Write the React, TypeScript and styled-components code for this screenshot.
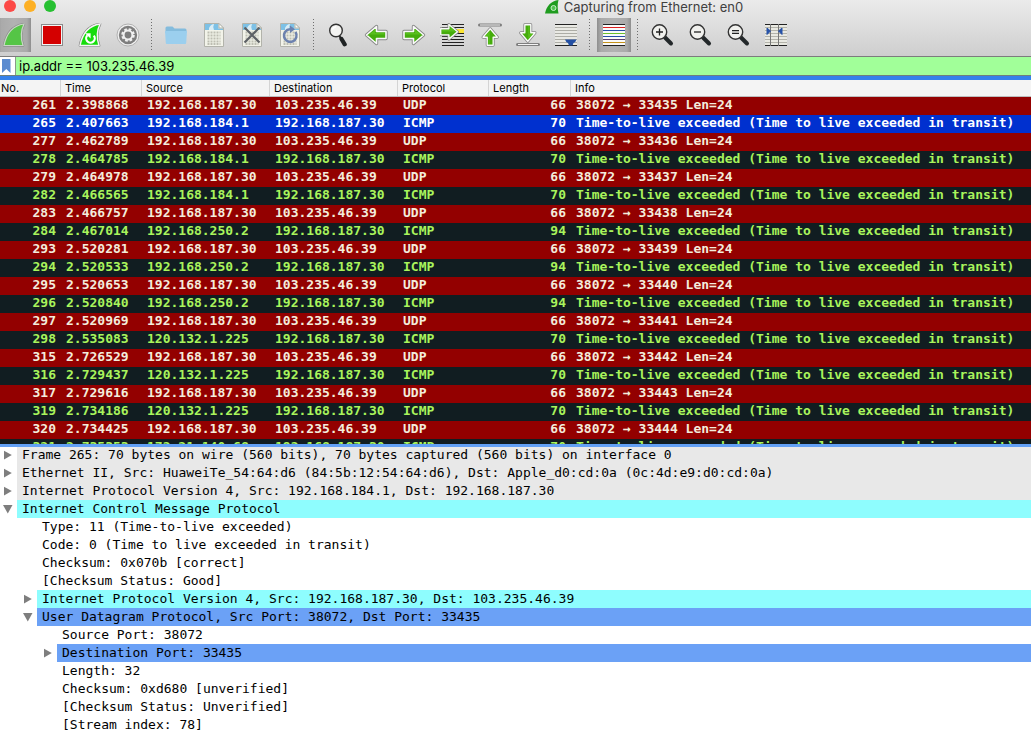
import React, { useState } from "react";
import type { ReactNode } from "react";
import styled, { createGlobalStyle, css } from "styled-components";

const UI = '"Inter", "Liberation Sans", sans-serif';
const MONO = '"DejaVu Sans Mono", "Liberation Mono", monospace';

const GlobalStyle = createGlobalStyle`
  * { box-sizing: border-box; }
  body { margin: 0; background: #fff; }
  button, input { font: inherit; color: inherit; margin: 0; padding: 0; border: 0; background: none; }
`;

/* ---------- window frame ---------- */

const Window = styled.div`
  height: 100vh;
  display: flex;
  flex-direction: column;
  overflow: hidden;
  background: #fff;
  color: #000;
  font-family: ${UI};
`;

const Chrome = styled.header`
  flex: none;
  overflow: hidden;
  background: linear-gradient(#ebebeb, #cecece);
`;

const TitleBar = styled.div`
  height: 14px;
  display: flex;
  align-items: flex-start;
`;

const Lights = styled.div`
  flex: none;
  width: 256px;
  display: flex;
  gap: 8px;
  padding-left: 4px;
`;

const Light = styled.button<{ $color: string }>`
  width: 12px;
  height: 12px;
  border-radius: 50%;
  background: ${(p) => p.$color};
`;

const Title = styled.h1`
  flex: 1;
  margin: 0;
  display: flex;
  justify-content: center;
  gap: 4px;
  white-space: nowrap;
  font-size: 13px;
  line-height: 14px;
  font-weight: 400;
  color: #404040;
`;

/* ---------- toolbar ---------- */

const ToolBar = styled.nav`
  height: 42px;
  display: flex;
  padding-top: 4px;
  margin-left: -5px;
`;

const Tool = styled.button<{ $pressed?: boolean }>`
  flex: none;
  width: 34px;
  height: 34px;
  margin: 0 2px;
  display: grid;
  place-items: center;
  ${(p) =>
    p.$pressed &&
    css`
      background: linear-gradient(90deg, #8e8e8e, #aaa 12%, #b2b2b2 50%, #aaa 88%, #8e8e8e);
    `}
`;

const Separator = styled.span`
  flex: none;
  width: 1px;
  height: 32px;
  margin: 1px 5px 0 4px;
  background: repeating-linear-gradient(#6e6e6e 0 1px, transparent 1px 3px);
`;

/* ---------- filter ---------- */

const FilterBar = styled.form`
  flex: none;
  height: 20px;
  display: flex;
  border-top: 1px solid #7c7c7c;
  border-bottom: 1px solid #6f7f7c;
  background: #a1ff99;
`;

const Bookmark = styled.button`
  width: 16px;
  display: grid;
  place-items: center start;
  padding-left: 2px;
  background: #fff;
  border-right: 1px solid #8a9a88;
`;

const FilterInput = styled.input`
  flex: 1;
  min-width: 0;
  padding-left: 3px;
  font-size: 13px;
  line-height: 18px;
  outline: 0;
`;

const FocusLine = styled.div`
  flex: none;
  height: 4px;
  background: #3581ea;
`;

/* ---------- packet list ---------- */

const PacketPane = styled.main`
  flex: 364 1 0;
  min-height: 0;
  overflow: hidden;
`;

const PacketTable = styled.table`
  width: 100%;
  table-layout: fixed;
  border-collapse: separate;
  border-spacing: 0;
`;

const Col = styled.col<{ $width?: number }>`
  width: ${(p) => (p.$width ? `${p.$width}px` : "auto")};
`;

const HeadCell = styled.th<{ $first?: boolean }>`
  height: 17px;
  padding: 0 0 0 ${(p) => (p.$first ? 1 : 4)}px;
  border-bottom: 1px solid #bdbdbd;
  background: #f4f4f4;
  box-shadow: inset -1px 0 #d4d4d4;
  text-align: left;
  font-size: 11px;
  line-height: 16px;
  font-weight: 400;
  &:last-child { box-shadow: none; }
`;

type Tone = "udp" | "icmp" | "selected";

const tones: Record<Tone, ReturnType<typeof css>> = {
  udp: css`background: #930000; color: #f3ecdc;`,
  icmp: css`background: #111d21; color: #a9f45c;`,
  selected: css`background: #0030cf; color: #fff;`,
};

const PacketRow = styled.tr<{ $tone: Tone }>`
  ${(p) => tones[p.$tone]}
`;

const Cell = styled.td<{ $right?: boolean }>`
  height: 18px;
  padding: 0 5px 2px;
  overflow: hidden;
  white-space: pre;
  text-align: ${(p) => (p.$right ? "right" : "left")};
  font-family: ${MONO};
  font-size: 13px;
  line-height: 16px;
  font-weight: 700;
`;

/* ---------- detail tree ---------- */

const Splitter = styled.div`
  flex: none;
  height: 3px;
  margin-bottom: -1px;
  z-index: 1;
  background: #62a0f5;
`;

const DetailPane = styled.section`
  flex: 298 1 0;
  min-height: 0;
  overflow: hidden;
  font-family: ${MONO};
  font-size: 13px;
  line-height: 18px;
`;

const DetailRow = styled.div<{ $level: number }>`
  height: 18px;
  display: flex;
  padding-left: ${(p) => p.$level * 20}px;
`;

const Toggle = styled.button`
  flex: none;
  width: 17px;
  display: grid;
  place-items: center start;
  padding-left: 3px;
`;

const Indent = styled.span`
  flex: none;
  width: 17px;
`;

const DetailText = styled.span<{ $fill?: string }>`
  flex: 1;
  padding-left: 5px;
  white-space: pre;
  background: ${(p) => p.$fill ?? "transparent"};
`;

/* ---------- icons ---------- */

const Icon = ({ children }: { children: ReactNode }) => (
  <svg width="24" height="24" viewBox="0 0 24 24" fill="none" aria-hidden="true">
    {children}
  </svg>
);

const FIN = "M2 22.5C4.500 10 11.500 2.500 22 1C18.500 8 18.500 15 21 22.500Z";

const Fin = () => (
  <Icon>
    <path d={FIN} fill="#55c546" stroke="#8d8d8d" strokeWidth="2.400" strokeLinejoin="round" />
    <path d={FIN} fill="#55c546" stroke="#c9d8c6" strokeWidth="1.200" />
  </Icon>
);

const StopIcon = () => (
  <Icon>
    <rect x="1.500" y="1.500" width="21" height="21" fill="#f4f4f4" stroke="#8b8b8b" />
    <rect x="3" y="3" width="18" height="18" fill="#d40000" />
  </Icon>
);

const RestartIcon = () => (
  <Icon>
    <path d={FIN} fill="#15dc0c" stroke="#7f7f7f" strokeWidth="2.600" strokeLinejoin="round" />
    <path d={FIN} fill="#15dc0c" stroke="#f5f5f5" strokeWidth="1.400" />
    <path d="M9.500 12.200A4.300 4.300 0 1 0 15.800 12.600" stroke="#fff" strokeWidth="2.200" />
    <path d="M7 10.200h5.600v5.400z" fill="#fff" />
  </Icon>
);

const OptionsIcon = () => (
  <Icon>
    <circle cx="12" cy="12" r="11" fill="#f1f1f1" stroke="#b0b0b0" />
    <circle cx="12" cy="12" r="9.200" fill="#7e7e7e" />
    <circle cx="12" cy="12" r="5.600" stroke="#f1f1f1" strokeWidth="2.400" strokeDasharray="2.600 1.800" />
    <circle cx="12" cy="12" r="4.400" fill="#7e7e7e" stroke="#f1f1f1" strokeWidth="2" />
  </Icon>
);

const FolderIcon = () => (
  <Icon>
    <path d="M1.500 5q0-1.500 1.500-1.500h5.500l2 2H21q1.500 0 1.500 1.500v3h-21z" fill="#84bcdd" />
    <path d="M1 8h22l-.8 12q0 1-1 1H2.800q-1 0-1-1z" fill="#9bcfee" />
  </Icon>
);

const Paper = ({ children }: { children?: ReactNode }) => (
  <Icon>
    <path d="M2.500.5h14.500l4.500 4.500v18.500h-19z" fill="#f2f3e9" stroke="#b2b3ab" />
    <path d="M3 1h13.500v4.500H21V7H11q-2-3-3.500 0H3z" fill="#7dc1e6" />
    <path d="M7 5q2-4 5-4-1.500 3 0 6H7z" fill="#d9edf6" />
    <path d="M17 .5V5h4.500z" fill="#fdfdf8" stroke="#b2b3ab" />
    <path
      d="M5.500 9.500h13M5.500 12.500h13M5.500 15.500h13M5.500 18.500h13M5.500 21h13"
      stroke="#bdbeb2"
      strokeWidth="2"
      strokeDasharray="2 1"
    />
    {children}
  </Icon>
);

const CloseFileIcon = () => (
  <Paper>
    <path d="M4.500 4.500l15 15M19.500 4.500l-15 15" stroke="#5d6165" strokeWidth="2.200" />
  </Paper>
);

const ReloadFileIcon = () => (
  <Paper>
    <path d="M17.500 9A6.300 6.300 0 1 1 12 6.200" stroke="#6d82ae" strokeWidth="2.500" />
    <path d="M12 2.500v7.500l5-3.800z" fill="#6d82ae" />
  </Paper>
);

const FindIcon = () => (
  <Icon>
    <path d="M13.500 13l5 8.500" stroke="#222" strokeWidth="2" />
    <path d="M15.500 16l3.200 5.300" stroke="#1f2324" strokeWidth="4.200" strokeLinecap="round" />
    <circle cx="10" cy="7.500" r="6.300" fill="#f3f3f1" stroke="#333" strokeWidth="1.400" />
    <path d="M6.500 6.500q1-2.500 3.500-2.800" stroke="#fff" strokeWidth="1.500" />
  </Icon>
);

const arrowPath = "M2 8.500h9.500V3.500L21.500 12l-10 8.500v-5H2z";

const ArrowShape = ({ transform }: { transform?: string }) => (
  <g transform={transform}>
    <path d={arrowPath} stroke="#878787" strokeWidth="3.400" strokeLinejoin="round" />
    <path d={arrowPath} fill="#45ac0c" stroke="#fafafa" strokeWidth="1.600" strokeLinejoin="round" />
    <path d="M3.500 10h9.500V6.500l6 5H3.500z" fill="#58bf1c" />
  </g>
);

const BackIcon = () => (
  <Icon>
    <ArrowShape transform="matrix(-1 0 0 1 24 0)" />
  </Icon>
);
const ForwardIcon = () => (
  <Icon>
    <ArrowShape />
  </Icon>
);

const GoToIcon = () => (
  <Icon>
    <path d="M2 1.500h22M2 4.500h22M2 13.500h22M2 16.500h22M2 19.500h22M2 22.500h22" stroke="#222" />
    <path d="M2 10.500h22" stroke="#222" />
    <rect x="16" y="6" width="8" height="4" fill="#fbe535" />
    <ArrowShape transform="translate(-1 -1.500) scale(.86)" />
  </Icon>
);

const FirstIcon = () => (
  <Icon>
    <path d="M1.500 2h21" stroke="#7f7f7f" strokeWidth="3" strokeLinecap="round" />
    <path d="M2 2h20" stroke="#f3f3f3" />
    <ArrowShape transform="translate(2 24) rotate(-90) scale(.85)" />
  </Icon>
);

const LastIcon = () => (
  <Icon>
    <path d="M1.500 21.500h21" stroke="#7f7f7f" strokeWidth="3" strokeLinecap="round" />
    <path d="M2 21.500h20" stroke="#f3f3f3" />
    <ArrowShape transform="translate(22 0) rotate(90) scale(.85)" />
  </Icon>
);

const AutoScrollIcon = () => (
  <Icon>
    <rect x="1" y="1" width="22" height="21" fill="#e9e9e4" />
    <path d="M1 4.500h22M1 7.500h22M1 10.500h22M1 13.500h22M1 16.500h22M1 19.500h22" stroke="#adada6" />
    <path d="M1 1.500h22M1 22.500h22" stroke="#222" />
    <path d="M11 16.500h11.500q-1 3-3 3.500l-1 2.500h-3.500l-1-2.500q-2-.5-3-3.500z" fill="#2450a4" />
  </Icon>
);

const ColorizeIcon = () => (
  <Icon>
    <rect x="1" y="1" width="22" height="22" fill="#fafafa" />
    <path d="M1 1.500h22M1 22.500h22" stroke="#222" />
    <path d="M1 4.500h22" stroke="#dc1f1f" />
    <path d="M1 7.500h22M1 13.500h22" stroke="#274fa6" />
    <path d="M1 10.500h22" stroke="#6cc12a" />
    <path d="M1 16.500h22" stroke="#5c4073" />
    <path d="M1 19.500h22" stroke="#c6931a" />
  </Icon>
);

const ZoomGlass = ({ sign }: { sign: string }) => (
  <Icon>
    <path d="M15 14.500l6 6" stroke="#23282a" strokeWidth="4" strokeLinecap="round" />
    <circle cx="9.500" cy="9" r="7.200" fill="#f1f1ee" stroke="#333" strokeWidth="1.400" />
    <path d={sign} stroke="#222" strokeWidth="1.300" />
  </Icon>
);

const ResizeIcon = () => (
  <Icon>
    <rect x="1" y="1" width="22" height="21" fill="#e9e9e2" />
    <path d="M1 4.500h22M1 7.500h22M1 10.500h22M1 13.500h22M1 16.500h22M1 19.500h22" stroke="#b3b3aa" />
    <path d="M1 1.500h22M1 22.500h22" stroke="#222" />
    <path d="M6.500 1v22M14.500 1v22" stroke="#777" />
    <path d="M3 5l3.500 3-3.500 3.500zM18 5l-3.500 3 3.500 3.500z" fill="#2752a8" stroke="#2752a8" />
  </Icon>
);

const TitleFin = () => (
  <svg width="16" height="14" viewBox="0 0 16 14" aria-hidden="true">
    <path d="M1 13.500C2.500 6 7 1 14.500 0c-1.200 4-1 9 0 13.500z" fill="#1f9c1f" />
    <circle cx="9.500" cy="8" r="2.500" fill="#4fc24f" stroke="#c8efc8" />
  </svg>
);

const BookmarkIcon = () => (
  <svg width="9" height="14" viewBox="0 0 9 14" aria-hidden="true">
    <path d="M0 0h8.500v14L4.300 10 0 14z" fill="#5b8bd0" />
  </svg>
);

const Triangle = ({ open }: { open: boolean }) => (
  <svg width="10" height="10" viewBox="0 0 10 10" aria-hidden="true">
    <path d={open ? "M0 1h9.500L4.800 9.500z" : "M1 .8L8.800 5 1 9.500z"} fill="#7e7e7e" />
  </svg>
);

/* ---------- data ---------- */

const tools: { label: string; icon: ReactNode; pressed?: boolean }[][] = [
  [
    { label: "Start capture", icon: <Fin />, pressed: true },
    { label: "Stop capture", icon: <StopIcon /> },
    { label: "Restart capture", icon: <RestartIcon /> },
    { label: "Capture options", icon: <OptionsIcon /> },
  ],
  [
    { label: "Open", icon: <FolderIcon /> },
    { label: "Save", icon: <Paper /> },
    { label: "Close file", icon: <CloseFileIcon /> },
    { label: "Reload file", icon: <ReloadFileIcon /> },
  ],
  [
    { label: "Find packet", icon: <FindIcon /> },
    { label: "Previous packet", icon: <BackIcon /> },
    { label: "Next packet", icon: <ForwardIcon /> },
    { label: "Go to packet", icon: <GoToIcon /> },
    { label: "First packet", icon: <FirstIcon /> },
    { label: "Last packet", icon: <LastIcon /> },
    { label: "Auto scroll", icon: <AutoScrollIcon /> },
  ],
  [{ label: "Colorize", icon: <ColorizeIcon />, pressed: true }],
  [
    { label: "Zoom in", icon: <ZoomGlass sign="M6 9h7M9.500 5.500v7" /> },
    { label: "Zoom out", icon: <ZoomGlass sign="M6 9h7" /> },
    { label: "Normal size", icon: <ZoomGlass sign="M6 7.700h7M6 10.300h7" /> },
    { label: "Resize columns", icon: <ResizeIcon /> },
  ],
];

const columns: { name: string; width?: number }[] = [
  { name: "No.", width: 61 },
  { name: "Time", width: 81 },
  { name: "Source", width: 128 },
  { name: "Destination", width: 128 },
  { name: "Protocol", width: 91 },
  { name: "Length", width: 82 },
  { name: "Info" },
];

const HOST = "192.168.187.30";
const TARGET = "103.235.46.39";
const TTL = "Time-to-live exceeded (Time to live exceeded in transit)";

type Packet = { no: number; time: string; src: string; dst: string; proto: string; len: number; info: string };

const udp = (no: number, time: string, port: number): Packet => ({
  no, time, src: HOST, dst: TARGET, proto: "UDP", len: 66, info: `38072 → ${port} Len=24`,
});
const icmp = (no: number, time: string, src: string, len = 70): Packet => ({
  no, time, src, dst: HOST, proto: "ICMP", len, info: TTL,
});

const packets: Packet[] = [
  udp(261, "2.398868", 33435),
  icmp(265, "2.407663", "192.168.184.1"),
  udp(277, "2.462789", 33436),
  icmp(278, "2.464785", "192.168.184.1"),
  udp(279, "2.464978", 33437),
  icmp(282, "2.466565", "192.168.184.1"),
  udp(283, "2.466757", 33438),
  icmp(284, "2.467014", "192.168.250.2", 94),
  udp(293, "2.520281", 33439),
  icmp(294, "2.520533", "192.168.250.2", 94),
  udp(295, "2.520653", 33440),
  icmp(296, "2.520840", "192.168.250.2", 94),
  udp(297, "2.520969", 33441),
  icmp(298, "2.535083", "120.132.1.225"),
  udp(315, "2.726529", 33442),
  icmp(316, "2.729437", "120.132.1.225"),
  udp(317, "2.729616", 33443),
  icmp(319, "2.734186", "120.132.1.225"),
  udp(320, "2.734425", 33444),
  icmp(321, "2.735353", "172.21.140.68"),
];

const GREY = "#e8e8e8";
const CYAN = "#8efdfe";
const BLUE = "#6ba1f6";

const details: { level: number; text: string; fill?: string; open?: boolean }[] = [
  { level: 0, open: false, fill: GREY, text: "Frame 265: 70 bytes on wire (560 bits), 70 bytes captured (560 bits) on interface 0" },
  { level: 0, open: false, fill: GREY, text: "Ethernet II, Src: HuaweiTe_54:64:d6 (84:5b:12:54:64:d6), Dst: Apple_d0:cd:0a (0c:4d:e9:d0:cd:0a)" },
  { level: 0, open: false, fill: GREY, text: "Internet Protocol Version 4, Src: 192.168.184.1, Dst: 192.168.187.30" },
  { level: 0, open: true, fill: CYAN, text: "Internet Control Message Protocol" },
  { level: 1, text: "Type: 11 (Time-to-live exceeded)" },
  { level: 1, text: "Code: 0 (Time to live exceeded in transit)" },
  { level: 1, text: "Checksum: 0x070b [correct]" },
  { level: 1, text: "[Checksum Status: Good]" },
  { level: 1, open: false, fill: CYAN, text: "Internet Protocol Version 4, Src: 192.168.187.30, Dst: 103.235.46.39" },
  { level: 1, open: true, fill: BLUE, text: "User Datagram Protocol, Src Port: 38072, Dst Port: 33435" },
  { level: 2, text: "Source Port: 38072" },
  { level: 2, open: false, fill: BLUE, text: "Destination Port: 33435" },
  { level: 2, text: "Length: 32" },
  { level: 2, text: "Checksum: 0xd680 [unverified]" },
  { level: 2, text: "[Checksum Status: Unverified]" },
  { level: 2, text: "[Stream index: 78]" },
];

export default function App() {
  const [filter, setFilter] = useState("ip.addr == 103.235.46.39");
  const [selected, setSelected] = useState(265);

  return (
    <Window>
      <GlobalStyle />
      <Chrome>
        <TitleBar>
          <Lights>
            <Light $color="#fc4a47" aria-label="Close" />
            <Light $color="#fdb025" aria-label="Minimise" />
            <Light $color="#27c032" aria-label="Full screen" />
          </Lights>
          <Title>
            <TitleFin />
            Capturing from Ethernet: en0
          </Title>
        </TitleBar>
        <ToolBar aria-label="Main toolbar">
          {tools.map((group, i) => (
            <React.Fragment key={i}>
              {i > 0 && <Separator />}
              {group.map((t) => (
                <Tool key={t.label} aria-label={t.label} $pressed={t.pressed}>
                  {t.icon}
                </Tool>
              ))}
            </React.Fragment>
          ))}
        </ToolBar>
      </Chrome>

      <FilterBar onSubmit={(e) => e.preventDefault()}>
        <Bookmark type="button" aria-label="Saved filters">
          <BookmarkIcon />
        </Bookmark>
        <FilterInput
          aria-label="Display filter"
          spellCheck={false}
          value={filter}
          onChange={(e) => setFilter(e.target.value)}
        />
      </FilterBar>
      <FocusLine />

      <PacketPane>
        <PacketTable>
          <colgroup>
            {columns.map((c) => (
              <Col key={c.name} $width={c.width} />
            ))}
          </colgroup>
          <thead>
            <tr>
              {columns.map((c, i) => (
                <HeadCell key={c.name} scope="col" $first={i === 0}>
                  {c.name}
                </HeadCell>
              ))}
            </tr>
          </thead>
          <tbody>
            {packets.map((p) => (
              <PacketRow
                key={p.no}
                $tone={p.no === selected ? "selected" : p.proto === "UDP" ? "udp" : "icmp"}
                onClick={() => setSelected(p.no)}
              >
                <Cell $right>{p.no}</Cell>
                <Cell>{p.time}</Cell>
                <Cell>{p.src}</Cell>
                <Cell>{p.dst}</Cell>
                <Cell>{p.proto}</Cell>
                <Cell $right>{p.len}</Cell>
                <Cell>{p.info}</Cell>
              </PacketRow>
            ))}
          </tbody>
        </PacketTable>
      </PacketPane>

      <Splitter />

      <DetailPane role="tree" aria-label="Packet details">
        {details.map((d) => (
          <DetailRow key={d.text} role="treeitem" aria-expanded={d.open} $level={d.level}>
            {d.open === undefined ? (
              <Indent />
            ) : (
              <Toggle aria-label={d.open ? "Collapse" : "Expand"}>
                <Triangle open={d.open} />
              </Toggle>
            )}
            <DetailText $fill={d.fill}>{d.text}</DetailText>
          </DetailRow>
        ))}
      </DetailPane>
    </Window>
  );
}
